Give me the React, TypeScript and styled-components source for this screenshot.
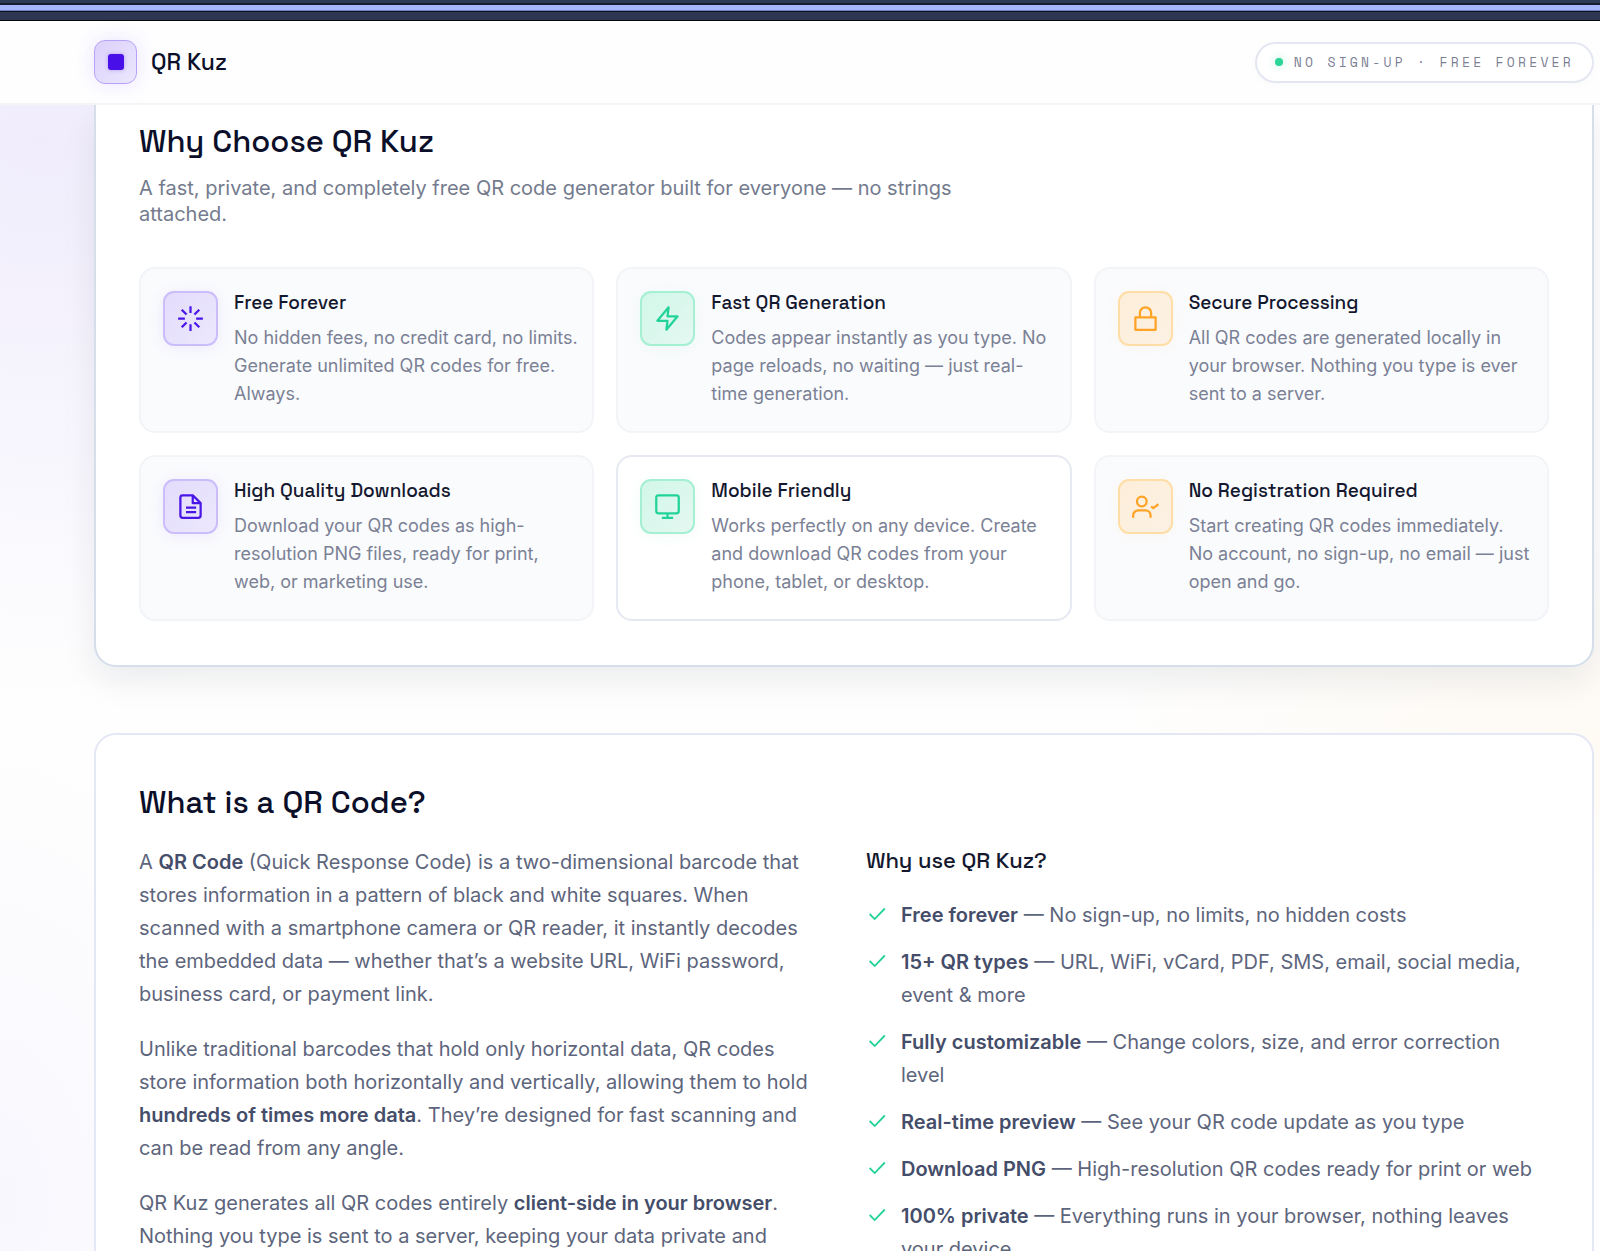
import React from "react";
import styled, { createGlobalStyle } from "styled-components";

const body = `"Inter", "Liberation Sans", sans-serif`;
const display = `"Space Grotesk", "Inter", "Liberation Sans", sans-serif`;
const mono = `"Space Mono", "Liberation Mono", monospace`;

type Tone = "violet" | "green" | "amber";

const tones: Record<Tone, { ink: string; edge: string; fill: string; glow: string }> = {
  violet: { ink: "#4a16e8", edge: "#cbbcfb", fill: "linear-gradient(135deg, #e3dcfc, #ece8fd)", glow: "rgba(91, 33, 240, 0.08)" },
  green: { ink: "#22d399", edge: "#a5efd3", fill: "linear-gradient(135deg, #d2f7e9, #e4f8f1)", glow: "rgba(16, 185, 129, 0.06)" },
  amber: { ink: "#ffa326", edge: "#ffdda6", fill: "linear-gradient(135deg, #fdeed9, #fbf1e4)", glow: "rgba(245, 158, 11, 0.05)" },
};

const GlobalStyle = createGlobalStyle`
  * { box-sizing: border-box; }
  body { margin: 0; font-family: ${body}; }
  h1, h2, h3, p, ul { margin: 0; padding: 0; }
`;

const Page = styled.div`
  display: flex;
  flex-direction: column;
  height: 100vh;
  overflow: hidden;
  background:
    radial-gradient(ellipse 700px 560px at 40px 140px, rgba(99, 58, 237, 0.09), transparent),
    radial-gradient(ellipse 500px 200px at 100% 740px, rgba(255, 184, 77, 0.06), transparent),
    radial-gradient(ellipse 260px 460px at 0 1200px, rgba(99, 72, 237, 0.04), transparent),
    #fefefe;
`;

const WindowStrip = styled.div`
  flex: none;
  height: 21px;
  background: linear-gradient(
    #2c3a55 0 3px, #171d30 3px 5px, #a5b5fb 5px 10px, #6f7fc0 10px 11px,
    #0c1020 11px 12px, #2d3751 12px 20px, #05070c 20px 21px
  );
`;

const Header = styled.header`
  position: relative;
  z-index: 1;
  flex: none;
  display: flex;
  align-items: center;
  justify-content: space-between;
  height: 84px;
  padding: 0 6px 0 94px;
  background: #fefeff;
  border-bottom: 2px solid #f3f4f8;
`;

const Brand = styled.a`
  display: flex;
  align-items: center;
  gap: 14px;
  color: #0b0f29;
  font: 500 23px/28px ${display};
  text-decoration: none;
`;

const Logo = styled.span`
  display: grid;
  place-items: center;
  width: 43px;
  height: 44px;
  border: 1px solid #b7a2f7;
  border-radius: 11px;
  background: linear-gradient(135deg, #dbd0fb, #ece7fd);
  box-shadow: 0 0 20px rgba(91, 33, 240, 0.12);

  &::before {
    content: "";
    width: 16px;
    height: 16px;
    border-radius: 3px;
    background: #490fe9;
    box-shadow: 0 0 4px rgba(73, 15, 233, 0.3);
  }
`;

const Pill = styled.div`
  display: flex;
  align-items: center;
  gap: 11px;
  height: 41px;
  padding: 0 18px;
  border: 2px solid #e4e7f1;
  border-radius: 21px;
  background: #ffffff;
  box-shadow: 0 2px 8px rgba(15, 23, 42, 0.02);
  color: #7b8194;
  font: 400 13px/20px ${mono};
  letter-spacing: 0.25em;
`;

const Dot = styled.span`
  width: 8px;
  height: 8px;
  border-radius: 50%;
  background: #2bd596;
  box-shadow: 0 0 8px rgba(43, 213, 150, 0.4);
`;

const Main = styled.main`
  display: flex;
  flex-direction: column;
  gap: 66px;
  padding: 0 6px 0 94px;
`;

const Features = styled.section`
  padding: 16px 43px 44px;
  border: 2px solid #d5dee9;
  border-top: 0;
  border-radius: 0 0 22px 22px;
  background: #ffffff;
  box-shadow: 0 14px 34px rgba(15, 23, 42, 0.08);
`;

const About = styled.section`
  padding: 47px 43px 44px;
  border: 2px solid #e4e7f4;
  border-radius: 22px;
  background: #ffffff;
`;

const Title = styled.h2`
  color: #0b0f29;
  font: 500 31px/40px ${display};
`;

const Lead = styled.p`
  max-width: 860px;
  margin: 14px 0 40px;
  color: #747b8e;
  font-size: 20px;
  line-height: 26px;
`;

const FeatureGrid = styled.div`
  display: grid;
  grid-template-columns: repeat(3, 1fr);
  gap: 22px;
`;

const Card = styled.article<{ $active?: boolean }>`
  display: flex;
  gap: 16px;
  min-height: 166px;
  padding: 22px 12px 21px 22px;
  border: 2px solid ${(p) => (p.$active ? "#e6e8f2" : "#f2f4f8")};
  border-radius: 16px;
  background: ${(p) => (p.$active ? "#ffffff" : "#fafbfd")};
`;

const IconTile = styled.span<{ $tone: Tone }>`
  flex: none;
  display: grid;
  place-items: center;
  width: 55px;
  height: 55px;
  border: 2px solid ${(p) => tones[p.$tone].edge};
  border-radius: 11px;
  background: ${(p) => tones[p.$tone].fill};
  box-shadow: 0 2px 16px ${(p) => tones[p.$tone].glow};
  color: ${(p) => tones[p.$tone].ink};
`;

const CardTitle = styled.h3`
  color: #14182f;
  font: 500 19px/24px ${display};
`;

const CardText = styled.p`
  margin-top: 9px;
  color: #7b8195;
  font-size: 18px;
  line-height: 28px;
`;

const Columns = styled.div`
  display: grid;
  grid-template-columns: 1fr 1fr;
  gap: 44px;
  margin-top: 24px;
`;

const Prose = styled.div`
  display: flex;
  flex-direction: column;
  gap: 22px;
  color: #5d657c;
  font-size: 20px;
  line-height: 33px;
  strong { color: #444d69; font-weight: 600; }
`;

const ListTitle = styled.h3`
  color: #14182f;
  font: 500 22px/28px ${display};
`;

const CheckList = styled.ul`
  display: flex;
  flex-direction: column;
  gap: 14px;
  margin-top: 25px;
  list-style: none;
  color: #5d657c;
  font-size: 20px;
  line-height: 33px;
  strong { color: #444d69; font-weight: 600; }
`;

const CheckItem = styled.li`
  display: flex;
  gap: 13px;
  padding-right: 8px;
  svg { flex: none; margin: 4px 0 0; color: #22d399; }
`;

const Icon = ({ children, size = 27 }: { children: React.ReactNode; size?: number }) => (
  <svg width={size} height={size} viewBox="0 0 24 24" fill="none" stroke="currentColor" strokeWidth={2} aria-hidden="true">
    {children}
  </svg>
);

const features: { title: string; text: string; tone: Tone; icon: React.ReactNode; active?: boolean }[] = [
  {
    title: "Free Forever",
    text: "No hidden fees, no credit card, no limits. Generate unlimited QR codes for free. Always.",
    tone: "violet",
    icon: <path d="M12 1v6M12 17v6M1 12h6M17 12h6M4.2 4.2l4.3 4.3M15.5 15.5l4.3 4.3M4.2 19.8l4.3-4.3M15.5 8.5l4.3-4.3" />,
  },
  {
    title: "Fast QR Generation",
    text: "Codes appear instantly as you type. No page reloads, no waiting — just real-time generation.",
    tone: "green",
    icon: <path d="M13 2 3 14h9l-1 8 10-12h-9l1-8z" strokeLinejoin="round" />,
  },
  {
    title: "Secure Processing",
    text: "All QR codes are generated locally in your browser. Nothing you type is ever sent to a server.",
    tone: "amber",
    icon: <path d="M3 11h18v11H3zM7 11V7a5 5 0 0 1 10 0v4" strokeLinejoin="round" />,
  },
  {
    title: "High Quality Downloads",
    text: "Download your QR codes as high-resolution PNG files, ready for print, web, or marketing use.",
    tone: "violet",
    icon: <path d="M14 2H5a2 2 0 0 0-2 2v16a2 2 0 0 0 2 2h14a2 2 0 0 0 2-2V9zM14 2v7h7M8 13h9M8 17h9" strokeLinejoin="round" />,
  },
  {
    title: "Mobile Friendly",
    text: "Works perfectly on any device. Create and download QR codes from your phone, tablet, or desktop.",
    tone: "green",
    icon: <path d="M4 2h16a2 2 0 0 1 2 2v12a2 2 0 0 1-2 2H4a2 2 0 0 1-2-2V4a2 2 0 0 1 2-2zM12 18v4M7 22h10" />,
    active: true,
  },
  {
    title: "No Registration Required",
    text: "Start creating QR codes immediately. No\u00a0account, no sign-up, no email — just open and go.",
    tone: "amber",
    icon: (
      <>
        <circle cx="8.7" cy="7.5" r="4.3" />
        <path d="M1 22v-2a4.500 4.500 0 0 1 4.500-4.500H12a4.500 4.500 0 0 1 4.500 4.500v2M17 12l2 1.500 4.500-3.500" />
      </>
    ),
  },
];

const reasons: [string, string][] = [
  ["Free forever", "No sign-up, no limits, no hidden costs"],
  ["15+ QR types", "URL, WiFi, vCard, PDF, SMS, email, social media, event & more"],
  ["Fully customizable", "Change colors, size, and error correction level"],
  ["Real-time preview", "See your QR code update as you type"],
  ["Download PNG", "High-resolution QR codes ready for print or web"],
  ["100% private", "Everything runs in your browser, nothing leaves your device"],
];

export default function App() {
  return (
    <Page>
      <GlobalStyle />
      <WindowStrip />
      <Header>
        <Brand href="#">
          <Logo />
          QR Kuz
        </Brand>
        <Pill>
          <Dot />
          NO SIGN-UP · FREE FOREVER
        </Pill>
      </Header>
      <Main>
        <Features>
          <Title>Why Choose QR Kuz</Title>
          <Lead>A fast, private, and completely free QR code generator built for everyone — no strings attached.</Lead>
          <FeatureGrid>
            {features.map((f) => (
              <Card key={f.title} $active={f.active}>
                <IconTile $tone={f.tone}>
                  <Icon>{f.icon}</Icon>
                </IconTile>
                <div>
                  <CardTitle>{f.title}</CardTitle>
                  <CardText>{f.text}</CardText>
                </div>
              </Card>
            ))}
          </FeatureGrid>
        </Features>
        <About>
          <Title>What is a QR Code?</Title>
          <Columns>
            <Prose>
              <p>
                A <strong>QR Code</strong> (Quick Response Code) is a two-dimensional barcode that stores information in a
                pattern of black and white squares. When scanned with a smartphone camera or QR reader, it instantly decodes
                the embedded data — whether that’s a website URL, WiFi password, business card, or payment link.
              </p>
              <p>
                Unlike traditional barcodes that hold only horizontal data, QR codes store information both horizontally and
                vertically, allowing them to hold <strong>hundreds of times more data</strong>. They’re designed for fast
                scanning and can be read from any angle.
              </p>
              <p>
                QR Kuz generates all QR codes entirely <strong>client-side in your browser</strong>. Nothing you type is sent
                to a server, keeping your data private and
              </p>
            </Prose>
            <div>
              <ListTitle>Why use QR Kuz?</ListTitle>
              <CheckList>
                {reasons.map(([name, detail]) => (
                  <CheckItem key={name}>
                    <Icon size={22}>
                      <path d="M20.500 6 9.500 17.500 4 12" />
                    </Icon>
                    <span>
                      <strong>{name}</strong> — {detail}
                    </span>
                  </CheckItem>
                ))}
              </CheckList>
            </div>
          </Columns>
        </About>
      </Main>
    </Page>
  );
}
